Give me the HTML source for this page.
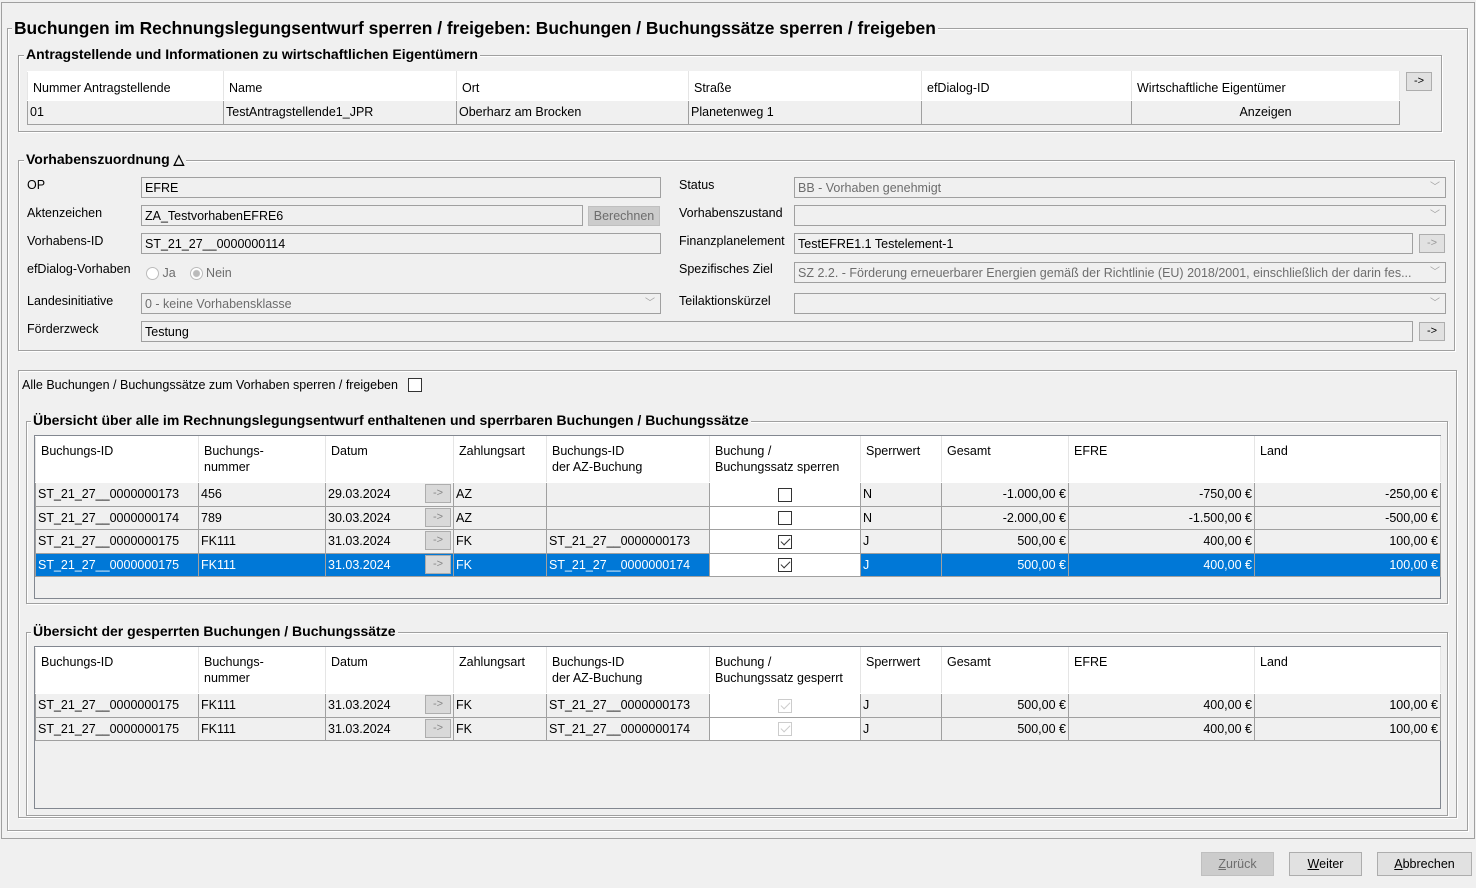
<!DOCTYPE html>
<html><head><meta charset="utf-8"><style>
*{box-sizing:border-box}
body{margin:0;width:1476px;height:888px;background:#f0f0f0;font-family:"Liberation Sans",sans-serif;font-size:12.5px;color:#000;position:relative;overflow:hidden}
.a{position:absolute}
.fs{position:absolute;border:1px solid #a0a0a0;box-shadow:inset 1px 1px 0 #fff,1px 1px 0 #fff}
.lg{position:absolute;background:#f0f0f0;font-weight:bold;padding:0 2px;white-space:nowrap}
.in{position:absolute;height:21px;border:1px solid #a0a0a0;background:#f0f0f0;padding:3px 3px;white-space:nowrap;overflow:hidden}
.dis{color:#6d6d6d}
.btn{position:absolute;border:1px solid #adadad;background:#e1e1e1;text-align:center;font-size:12.5px}
.arr{position:absolute;width:26px;height:19px;border:1px solid #adadad;background:#e1e1e1;text-align:center;font-size:11px;line-height:16px}
.dd{position:absolute;right:1px;top:1px;width:18px;height:17px;color:#a0a0a0;font-size:10px;text-align:center;line-height:17px}
table{border-collapse:collapse;table-layout:fixed;position:absolute}
td{border:1px solid #a0a0a0;padding:0 2px;white-space:nowrap;overflow:hidden;height:23.5px;vertical-align:middle}
tr.h td{background:#fff;border-color:#fff #e5e5e5 #fff #e5e5e5;vertical-align:top;padding:6px 5px 0;height:46px;line-height:16px}
tr.h2 td{background:#fff;border-color:#fff #e5e5e5 #fff #e5e5e5;vertical-align:top;padding:8px 5px 0;height:29px;line-height:16px}
tr.r td{background:#f0f0f0}
tr.s td{background:#0078d7;color:#fff}
td.w{background:#fff!important}
td.rt{text-align:right}
.cb{display:inline-block;width:14px;height:14px;border:1px solid #333;background:#fff;vertical-align:middle;position:relative}
.cb.g{border-color:#ccc}
.ck::after{content:"";position:absolute;left:4px;top:0px;width:4px;height:8px;border:solid #333;border-width:0 1.5px 1.5px 0;transform:rotate(45deg)}
.cb.g.ck::after{border-color:#ccc}
.tb{position:absolute;border:1px solid #828790;background:#f0f0f0}
.da{position:relative}
.da .arr{right:2px;top:1px;left:auto;color:#888;background:#d9d9d9}
</style></head><body>
<div class="a" style="left:1px;top:2px;width:1474px;height:837px;border:1px solid #a0a0a0"></div>
<div class="fs" style="left:7px;top:28px;width:1461px;height:803px"></div>
<div class="lg" style="left:12px;top:18px;font-size:17.4px">Buchungen im Rechnungslegungsentwurf sperren / freigeben: Buchungen / Buchungssätze sperren / freigeben</div>

<div class="fs" style="left:18px;top:55px;width:1424px;height:77px"></div>
<div class="lg" style="left:24px;top:46px;font-size:14px">Antragstellende und Informationen zu wirtschaftlichen Eigentümern</div>
<table style="left:27px;top:71px;width:1372px">
<colgroup><col style="width:196px"><col style="width:233px"><col style="width:232px"><col style="width:233px"><col style="width:210px"><col style="width:268px"></colgroup>
<tr class="h2"><td>Nummer Antragstellende</td><td>Name</td><td>Ort</td><td>Straße</td><td>efDialog-ID</td><td>Wirtschaftliche Eigentümer</td></tr>
<tr class="r"><td>01</td><td>TestAntragstellende1_JPR</td><td>Oberharz am Brocken</td><td>Planetenweg 1</td><td></td><td style="text-align:center">Anzeigen</td></tr>
</table>
<div class="arr" style="left:1406px;top:72px">-&gt;</div>

<div class="fs" style="left:18px;top:160px;width:1437px;height:191px"></div>
<div class="lg" style="left:24px;top:151px;font-size:14px">Vorhabenszuordnung △</div>
<div class="a" style="left:27px;top:178px">OP</div>
<div class="in" style="left:141px;top:177px;width:520px">EFRE</div>
<div class="a" style="left:27px;top:206px">Aktenzeichen</div>
<div class="in" style="left:141px;top:205px;width:442px">ZA_TestvorhabenEFRE6</div>
<div class="btn dis" style="left:588px;top:206px;width:72px;height:20px;line-height:18px;background:#ccc;border-color:#bfbfbf">Berechnen</div>
<div class="a" style="left:27px;top:234px">Vorhabens-ID</div>
<div class="in" style="left:141px;top:233px;width:520px">ST_21_27__0000000114</div>
<div class="a" style="left:27px;top:262px">efDialog-Vorhaben</div>
<div class="a dis" style="left:146px;top:266px"><span style="display:inline-block;width:13px;height:13px;border:1px solid #bbb;border-radius:50%;vertical-align:middle;background:#fff"></span> Ja &nbsp;&nbsp;&nbsp;<span style="display:inline-block;width:13px;height:13px;border:1px solid #bbb;border-radius:50%;vertical-align:middle;background:radial-gradient(#bbb 3px,#fff 4px)"></span> Nein</div>
<div class="a" style="left:27px;top:294px">Landesinitiative</div>
<div class="in dis" style="left:141px;top:293px;width:520px">0 - keine Vorhabensklasse<div class="dd">﹀</div></div>
<div class="a" style="left:27px;top:322px">Förderzweck</div>
<div class="in" style="left:141px;top:321px;width:1272px">Testung</div>
<div class="arr" style="left:1419px;top:322px">-&gt;</div>

<div class="a" style="left:679px;top:178px">Status</div>
<div class="in dis" style="left:794px;top:177px;width:652px">BB - Vorhaben genehmigt<div class="dd">﹀</div></div>
<div class="a" style="left:679px;top:206px">Vorhabenszustand</div>
<div class="in" style="left:794px;top:205px;width:652px"><div class="dd">﹀</div></div>
<div class="a" style="left:679px;top:234px">Finanzplanelement</div>
<div class="in" style="left:794px;top:233px;width:619px">TestEFRE1.1 Testelement-1</div>
<div class="arr" style="left:1419px;top:234px;color:#999">-&gt;</div>
<div class="a" style="left:679px;top:262px">Spezifisches Ziel</div>
<div class="in dis" style="left:794px;top:262px;width:652px">SZ 2.2. - Förderung erneuerbarer Energien gemäß der Richtlinie (EU) 2018/2001, einschließlich der darin fes...<div class="dd">﹀</div></div>
<div class="a" style="left:679px;top:294px">Teilaktionskürzel</div>
<div class="in" style="left:794px;top:293px;width:652px"><div class="dd">﹀</div></div>

<div class="fs" style="left:18px;top:370px;width:1439px;height:448px"></div>
<div class="a" style="left:22px;top:378px">Alle Buchungen / Buchungssätze zum Vorhaben sperren / freigeben &nbsp;&nbsp;<span class="cb" style="margin-top:-2px"></span></div>

<div class="fs" style="left:26px;top:421px;width:1422px;height:183px"></div>
<div class="lg" style="left:31px;top:412px;font-size:14px">Übersicht über alle im Rechnungslegungsentwurf enthaltenen und sperrbaren Buchungen / Buchungssätze</div>
<div class="tb" style="left:34px;top:435px;width:1407px;height:164px"></div>
<table style="left:35px;top:436px;width:1405px">
<colgroup><col style="width:163px"><col style="width:127px"><col style="width:128px"><col style="width:93px"><col style="width:163px"><col style="width:151px"><col style="width:81px"><col style="width:127px"><col style="width:186px"><col style="width:186px"></colgroup>
<tr class="h"><td>Buchungs-ID</td><td>Buchungs-<br>nummer</td><td>Datum</td><td>Zahlungsart</td><td>Buchungs-ID<br>der AZ-Buchung</td><td>Buchung /<br>Buchungssatz sperren</td><td>Sperrwert</td><td>Gesamt</td><td>EFRE</td><td>Land</td></tr>
<tr class="r"><td>ST_21_27__0000000173</td><td>456</td><td class="da">29.03.2024<span class="arr">-&gt;</span></td><td>AZ</td><td></td><td class="w" style="text-align:center"><span class="cb"></span></td><td>N</td><td class="rt">-1.000,00 €</td><td class="rt">-750,00 €</td><td class="rt">-250,00 €</td></tr>
<tr class="r"><td>ST_21_27__0000000174</td><td>789</td><td class="da">30.03.2024<span class="arr">-&gt;</span></td><td>AZ</td><td></td><td class="w" style="text-align:center"><span class="cb"></span></td><td>N</td><td class="rt">-2.000,00 €</td><td class="rt">-1.500,00 €</td><td class="rt">-500,00 €</td></tr>
<tr class="r"><td>ST_21_27__0000000175</td><td>FK111</td><td class="da">31.03.2024<span class="arr">-&gt;</span></td><td>FK</td><td>ST_21_27__0000000173</td><td class="w" style="text-align:center"><span class="cb ck"></span></td><td>J</td><td class="rt">500,00 €</td><td class="rt">400,00 €</td><td class="rt">100,00 €</td></tr>
<tr class="s"><td>ST_21_27__0000000175</td><td>FK111</td><td class="da">31.03.2024<span class="arr">-&gt;</span></td><td>FK</td><td>ST_21_27__0000000174</td><td class="w" style="text-align:center"><span class="cb ck"></span></td><td>J</td><td class="rt">500,00 €</td><td class="rt">400,00 €</td><td class="rt">100,00 €</td></tr>
</table>

<div class="fs" style="left:26px;top:632px;width:1422px;height:184px"></div>
<div class="lg" style="left:31px;top:623px;font-size:14px">Übersicht der gesperrten Buchungen / Buchungssätze</div>
<div class="tb" style="left:34px;top:646px;width:1407px;height:163px"></div>
<table style="left:35px;top:647px;width:1405px">
<colgroup><col style="width:163px"><col style="width:127px"><col style="width:128px"><col style="width:93px"><col style="width:163px"><col style="width:151px"><col style="width:81px"><col style="width:127px"><col style="width:186px"><col style="width:186px"></colgroup>
<tr class="h"><td>Buchungs-ID</td><td>Buchungs-<br>nummer</td><td>Datum</td><td>Zahlungsart</td><td>Buchungs-ID<br>der AZ-Buchung</td><td>Buchung /<br>Buchungssatz gesperrt</td><td>Sperrwert</td><td>Gesamt</td><td>EFRE</td><td>Land</td></tr>
<tr class="r"><td>ST_21_27__0000000175</td><td>FK111</td><td class="da">31.03.2024<span class="arr">-&gt;</span></td><td>FK</td><td>ST_21_27__0000000173</td><td class="w" style="text-align:center"><span class="cb g ck"></span></td><td>J</td><td class="rt">500,00 €</td><td class="rt">400,00 €</td><td class="rt">100,00 €</td></tr>
<tr class="r"><td>ST_21_27__0000000175</td><td>FK111</td><td class="da">31.03.2024<span class="arr">-&gt;</span></td><td>FK</td><td>ST_21_27__0000000174</td><td class="w" style="text-align:center"><span class="cb g ck"></span></td><td>J</td><td class="rt">500,00 €</td><td class="rt">400,00 €</td><td class="rt">100,00 €</td></tr>
</table>

<div class="btn dis" style="left:1201px;top:852px;width:73px;height:24px;line-height:22px;background:#ccc;border-color:#bfbfbf"><u>Z</u>urück</div>
<div class="btn" style="left:1289px;top:852px;width:73px;height:24px;line-height:22px"><u>W</u>eiter</div>
<div class="btn" style="left:1377px;top:852px;width:95px;height:24px;line-height:22px"><u>A</u>bbrechen</div>
</body></html>
